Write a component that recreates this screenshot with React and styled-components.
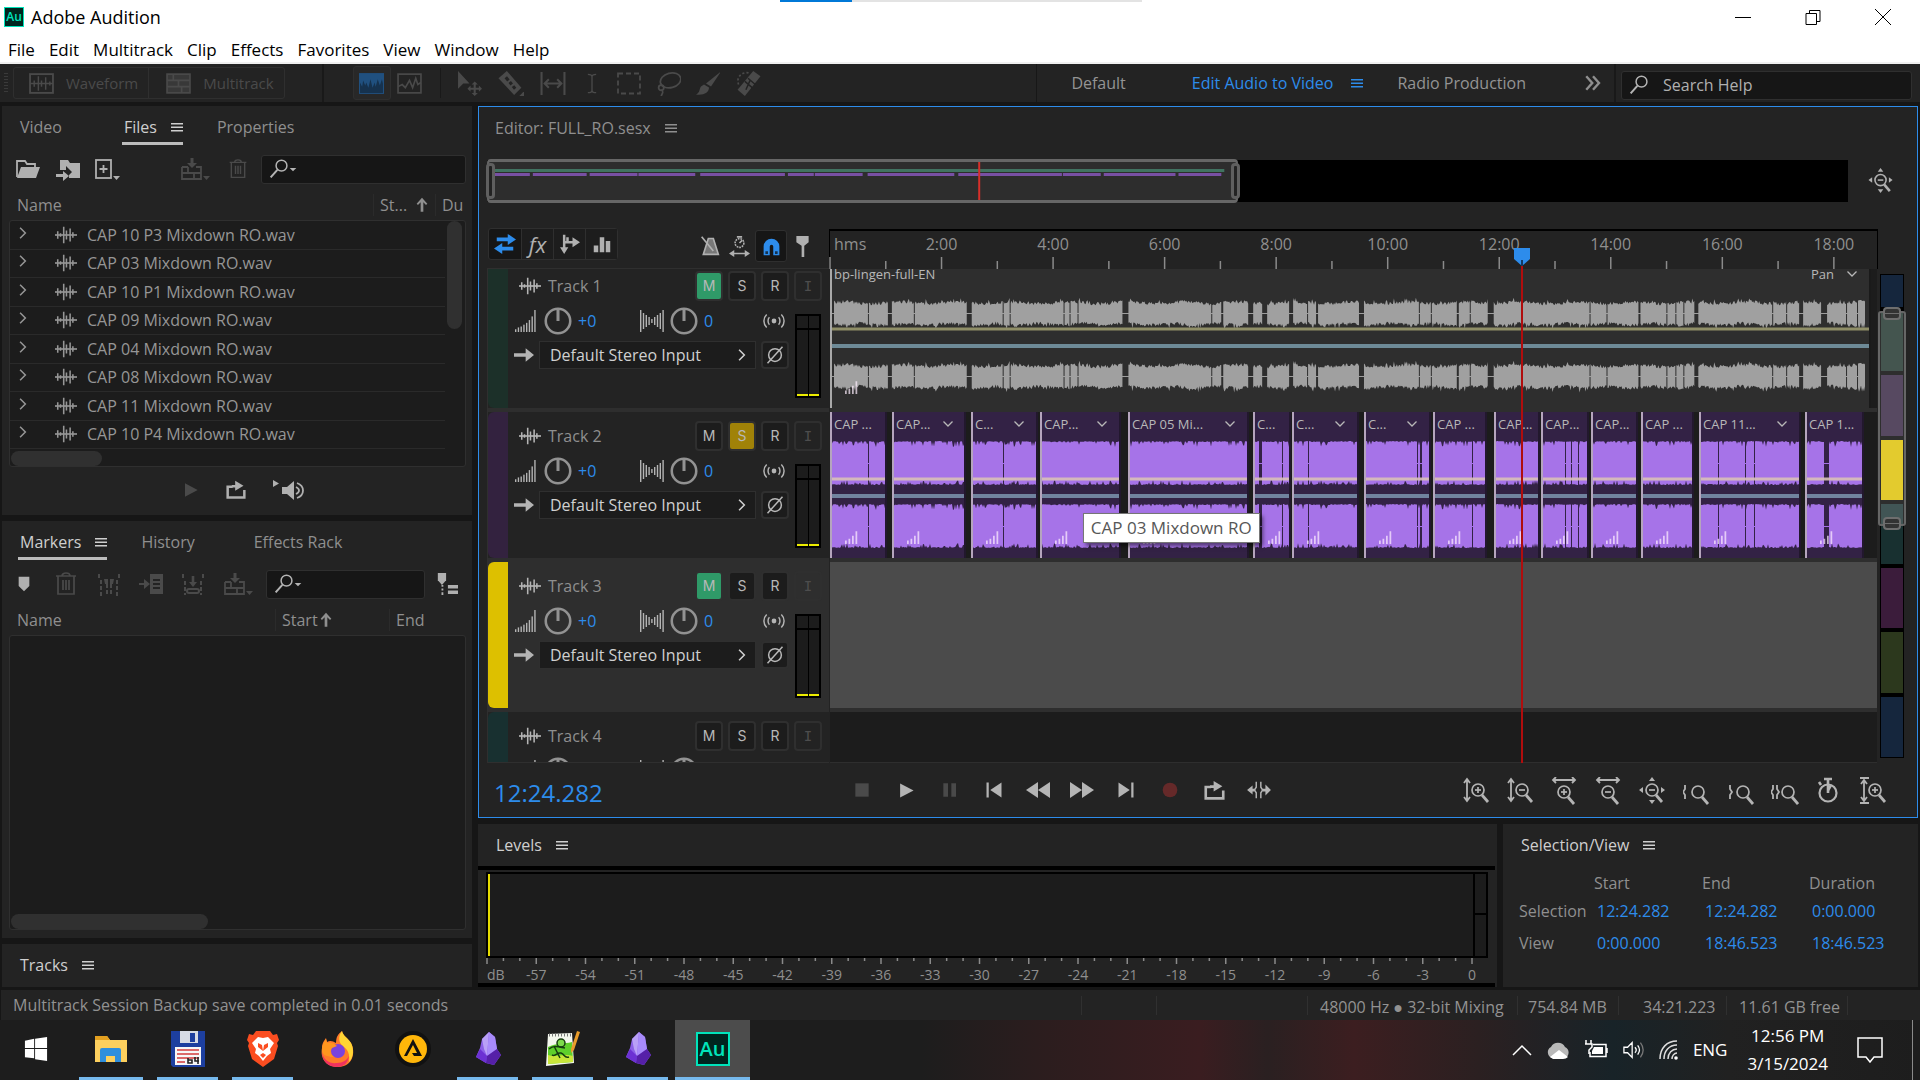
import React from "react";
import styled, { createGlobalStyle, css } from "styled-components";

const Global = createGlobalStyle`
  * { box-sizing: border-box; }
  body { margin: 0; background: #161616; }
  body, button, input, select, table { font: 16px/20px "Open Sans", "Noto Sans", sans-serif; }
  button { border: 0; padding: 0; background: none; color: inherit; white-space: nowrap; }
  svg { display: block; flex: none; }
`;

/* ---------- palette ---------- */
const c = {
  panel: "#232323",
  well: "#1c1c1c",
  deep: "#161616",
  line: "#2f2f2f",
  dim: "#8f8f8f",
  text: "#c2c2c2",
  off: "#4a4a4a",
  blue: "#2d8ceb",
};

/* ---------- icons ---------- */
const shapes = {
  wave: <g fill="none" stroke="currentColor"><path d="M0 12h24" strokeWidth="1.8" /><path d="M3 8v8M6 10v4M9.500 3v18M12.500 7v10M16.500 5v14M19.500 9v6" strokeWidth="1.7" /></g>,
  waveBox: <g fill="none" stroke="currentColor" strokeWidth="1.8"><rect x="1" y="3" width="22" height="18" /><path d="M1 12h22M5 9v6M9 5v14M12 9v6M16 6v12M20 10v4" strokeWidth="1.4" /></g>,
  multiBox: <g stroke="currentColor" strokeWidth="1.6"><rect x="1" y="3" width="22" height="18" fill="#383838" /><path d="M1 9h22M1 15h22M7 3v6M12 9v6M15 15v6" fill="none" /></g>,
  spectral: <g><rect x="0" y="2" width="24" height="20" fill="#20507f" /><path d="M1 21V11l2 4 1-6 2 5 1-3 2 5 2-8 2 8 2-5 1 4 2-7 2 6 2-6 1 4v9z" fill="#16324e" /></g>,
  lineBox: <g fill="none" stroke="currentColor" strokeWidth="1.6"><rect x="1" y="3" width="22" height="18" /><path d="M1 15l4-2 3 3 4-7 3 7 3-9 2 6 3-2" /></g>,
  move: <g fill="currentColor"><path d="M1 0l11 12H6l-5 5z" /><path d="M17 10l3 3h-2v3h3v-2l3 3-3 3v-2h-3v3h2l-3 3-3-3h2v-3h-3v2l-3-3 3-3v2h3v-3h-2z" /></g>,
  razor: <g fill="currentColor"><path d="M8 0L22 16l-7 7L0 7z" /><path d="M7 6l9 11" stroke="#232323" strokeWidth="3" strokeDasharray="4 2 3 2" /><path d="M25 19v5h-5z" /></g>,
  slip: <g fill="none" stroke="currentColor" strokeWidth="2"><path d="M1 1v22M23 1v22M4 12h16M8 8l-4 4 4 4M16 8l4 4-4 4" /></g>,
  ibeam: <g fill="none" stroke="currentColor" strokeWidth="1.6"><path d="M7 1c3 0 5 1 5 3 0-2 2-3 5-3M12 4v16M7 23c3 0 5-1 5-3 0 2 2 3 5 3" /></g>,
  marquee: <rect x="1" y="2" width="22" height="20" fill="none" stroke="currentColor" strokeWidth="1.8" strokeDasharray="5 3" />,
  lasso: <g fill="none" stroke="currentColor" strokeWidth="1.7"><ellipse cx="14" cy="9" rx="10" ry="7" transform="rotate(-15 14 9)" /><circle cx="5" cy="16" r="2.5" /><path d="M5 18c3 2 1 3 0 6" /></g>,
  brush: <g fill="currentColor"><path d="M25 0L15 15l-5-3z" /><path d="M8 13l5 3c0 5-5 8-13 7 4-2 3-5 5-8z" /></g>,
  heal: <g><path d="M17 0l7 5L9 24l-7-6z" fill="currentColor" /><path d="M9 10l7 6M12 7l7 6M14 9l-4 9" stroke="#232323" strokeWidth="1.4" /><path d="M3 13C0 6 7 0 13 2" fill="none" stroke="currentColor" strokeWidth="1.6" strokeDasharray="2 2" /></g>,
  folder: <g><path d="M1 20V4h8l2 3h8v3" fill="none" stroke="currentColor" strokeWidth="1.8" /><path d="M1 21L5 10h19l-4 11z" fill="currentColor" /></g>,
  importF: <g fill="currentColor"><path d="M4 13V3h8l2 3h10v15H13v-3l3-3-6-6v4z" /><path d="M0 17h7v-3l6 5-6 5v-4H0z" /></g>,
  newFile: <g fill="none" stroke="currentColor" strokeWidth="1.8"><rect x="1" y="3" width="15" height="18" /><path d="M8.500 8v8M4.500 12h8" /><path d="M18 19h7l-3.500 4z" fill="currentColor" stroke="none" /></g>,
  insert: <g fill="none" stroke="currentColor" strokeWidth="1.8"><path d="M1 10h6M15 10h5v12H1V10M1 16h19M7 10v6M13 16v6" /><path d="M11 1v6" strokeWidth="3" /><path d="M6 6h10l-5 5z" fill="currentColor" stroke="none" /><path d="M22 19h7l-3.500 4z" fill="currentColor" stroke="none" /></g>,
  trash: <g fill="none" stroke="currentColor" strokeWidth="1.7"><path d="M2 4h20M8 4c0-4 8-4 8 0M4 4v18h16V4M9 8v10M12 8v10M15 8v10" /></g>,
  search: <g fill="none" stroke="currentColor" strokeWidth="1.8"><circle cx="15" cy="8" r="6.500" /><path d="M10 13L2 22" strokeWidth="2.4" /></g>,
  caret: <path d="M2 9h20l-10 10z" fill="currentColor" />,
  marker: <path d="M4 1h16v14l-8 8-8-8z" fill="currentColor" />,
  markRange: <g fill="none" stroke="currentColor" strokeWidth="2"><path d="M2 2v5M22 2v5M4 8v16M20 8v16M10 12v12M14 12v12" strokeDasharray="4 2" /><path d="M7 7h4v5H8zM13 7h4l-1 5h-3z" fill="currentColor" stroke="none" /></g>,
  toList: <g fill="currentColor"><path d="M0 11h5V7l6 5-6 5v-4H0z" /><path d="M11 2h13v20H11zM14 7v2h7V7zm0 4v2h7v-2zm0 4v2h7v-2z" fillRule="evenodd" /></g>,
  dropMark: <g fill="none" stroke="currentColor" strokeWidth="2"><path d="M2 2v5M22 2v5M4 9v14M20 9v14" strokeDasharray="4 2" /><path d="M12 4v8" strokeWidth="2.6" /><path d="M8 10h8l-4 5z" fill="currentColor" stroke="none" /><rect x="6" y="17" width="12" height="4" rx="2" /></g>,
  markList: <g fill="currentColor"><path d="M2 0h9v8l-4.500 5L2 8z" /><path d="M6 13h2v2H6zm0 4h2v2H6zm0 4h2v3H6zM13 13h11v4H13zM13 19h11v4H13z" /></g>,
  play: <path d="M3 2l19 10L3 22z" fill="currentColor" />,
  stop: <path d="M2 2h20v20H2z" fill="currentColor" />,
  pause: <path d="M2 2h7v20H2zM14 2h7v20h-7z" fill="currentColor" />,
  loop: <g><path d="M8 8H2v13h20v-9" fill="none" stroke="currentColor" strokeWidth="3" /><path d="M7 6h4V1l10 6-10 6V9H7z" fill="currentColor" /></g>,
  speaker: <g fill="currentColor"><path d="M0 2l6 3.500L0 9z" /><path d="M9 9h5l7-6v19l-7-6H9z" /><path d="M23 9c4 2 4 5 0 7M24 5c8 3 8 12 0 15" fill="none" stroke="currentColor" strokeWidth="1.8" /></g>,
  first: <path d="M2 2h3v20H2zM22 2v20L7 12z" fill="currentColor" />,
  last: <path d="M19 2h3v20h-3zM2 2v20l15-10z" fill="currentColor" />,
  rew: <path d="M12 4v16L0 12zM24 4v16l-12-8z" fill="currentColor" />,
  ff: <path d="M0 4v16l12-8zM12 4v16l12-8z" fill="currentColor" />,
  rec: <circle cx="12" cy="12" r="11" fill="#652929" />,
  skipSel: <g fill="none" stroke="currentColor" strokeWidth="2"><path d="M10 3v6l-2 3 2 3v6M15 3v6l2 3-2 3v6" strokeWidth="1.6" /><path d="M5 12h3M17 12h4" strokeWidth="3" /><path d="M6 7l-6 5 6 5zM20 6l6 6-6 6z" fill="currentColor" stroke="none" /></g>,
  up: <path d="M12 1l8 9-2 2-4-4v14h-4V8l-4 4-2-2z" fill="currentColor" />,
  right: <path d="M0 10h14V4l10 8-10 8v-6H0z" fill="currentColor" />,
  chevR: <path d="M7 3l9 9-9 9" fill="none" stroke="currentColor" strokeWidth="2.6" />,
  chevD: <path d="M3 7l9 9 9-9" fill="none" stroke="currentColor" strokeWidth="2.6" />,
  dbl: <path d="M3 3l8 9-8 9M12 3l8 9-8 9" fill="none" stroke="currentColor" strokeWidth="3.2" />,
  burger: <path d="M0 4h24v3H0zM0 11h24v3H0zM0 18h24v3H0z" fill="currentColor" />,
  swap: <g fill="currentColor"><path d="M3 5h12V1l9 6-9 6V9H3z" /><path d="M21 15H9v-4l-9 6 9 6v-4h12z" /></g>,
  sends: <g fill="none" stroke="currentColor" strokeWidth="3"><path d="M5 1v17M5 10h12M9 4v6" /><path d="M15 4l9 6-9 6zM0 16h10l-5 8z" fill="currentColor" stroke="none" /></g>,
  eq: <path d="M1 14h6v9H1zM9 3h6v20H9zM17 8h6v15h-6z" fill="currentColor" />,
  metro: <g fill="none" stroke="currentColor" strokeWidth="2"><path d="M10 3h6l6 19H4z" fill="#777" /><path d="M2 1l14 17" /></g>,
  timer: <g fill="none" stroke="currentColor" strokeWidth="1.8"><circle cx="12" cy="8" r="5" strokeDasharray="2 1" /><path d="M12 8l3-3M9 1h6M2 20h20" /><path d="M6 16l-6 4 6 4zM18 16l6 4-6 4z" fill="currentColor" stroke="none" /></g>,
  magnet: <g><path d="M3 22V12a9 9 0 0118 0v10h-7V12a2 2 0 00-4 0v10z" fill="currentColor" /><path d="M5 19h3M16 19h3" stroke="#16324e" strokeWidth="3" /></g>,
  pin: <path d="M5 0h14v7l-5 4v13h-3V11L5 7z" fill="currentColor" />,
  vol: <g fill="currentColor">{[21, 19, 18, 16, 14, 11, 7, 0].map((y, i) => <rect key={i} x={i * 3} y={y} width="1.5" height={24 - y} />)}</g>,
  pan: <g fill="currentColor">{[11, 8, 6, 4, 2, 4, 6, 8, 11].map((h, i) => <rect key={i} x={i * 2.8} y={12 - h} width="1.4" height={h * 2} />)}</g>,
  knob: <g fill="none" stroke="#929292" strokeWidth="2.200"><circle cx="12" cy="12" r="10.500" /><path d="M12 2v10" strokeWidth="2.6" /></g>,
  air: <g fill="none" stroke="currentColor" strokeWidth="1.6"><circle cx="12" cy="12" r="1.800" fill="currentColor" /><path d="M7 8c-2 2-2 6 0 8M17 8c2 2 2 6 0 8M4 5c-4 4-4 10 0 14M20 5c4 4 4 10 0 14" /></g>,
  phase: <g fill="none" stroke="currentColor" strokeWidth="2"><circle cx="12" cy="12" r="8.500" /><path d="M2 23L22 1" /></g>,
  clipVol: <path d="M0 18h3v6H0zM6 15h3v9H6zM12 10h3v14h-3zM18 2h3v22h-3z" fill="currentColor" />,
};
const mag = (x, y, sign) => (
  <g key="m" fill="none" stroke="currentColor" strokeWidth="1.7">
    <circle cx={x} cy={y} r="6" />
    <path d={`M${x + 4} ${y + 5}l6 7`} strokeWidth="2.8" />
    {sign && <path d={`M${x - 3} ${y}h6`} />}
    {sign === "+" && <path d={`M${x} ${y - 3}v6`} />}
  </g>
);
const thin = { fill: "none", stroke: "currentColor", strokeWidth: 1.8 };
Object.assign(shapes, {
  zvIn: <g><path d="M4 3v20M1 6l3-4 3 4M1 20l3 4 3-4" {...thin} />{mag(15, 13, "+")}</g>,
  zvOut: <g><path d="M4 3v20M1 6l3-4 3 4M1 20l3 4 3-4" {...thin} />{mag(15, 13, "-")}</g>,
  zhIn: <g><path d="M2 3h22M5 0L2 3l3 3M21 0l3 3-3 3" {...thin} />{mag(13, 15, "+")}</g>,
  zhOut: <g><path d="M2 3h22M5 0L2 3l3 3M21 0l3 3-3 3" {...thin} />{mag(13, 15, "-")}</g>,
  zFull: <g>{mag(13, 13, "-")}<path d="M13 0l3 4h-6zM13 27l3-4h-6zM0 13l4-3v6zM26 13l-4-3v6z" fill="currentColor" /></g>,
  zInP: <g><path d="M2 8v4l-2 3 2 3v4" {...thin} />{mag(15, 15)}</g>,
  zOutP: <g><path d="M3 8v4l2 3-2 3v4" {...thin} />{mag(16, 15)}</g>,
  zSel: <g><path d="M2 8v4l-2 3 2 3v4M6 8v4l2 3-2 3v4" {...thin} />{mag(17, 15)}</g>,
  zTime: <g><circle cx="13" cy="16" r="8.500" {...thin} strokeWidth="2.200" /><path d="M13 16V3M9 2h8M6 8L4 5" {...thin} strokeWidth="2.600" /><path d="M13 16l4-7-4-1z" fill="currentColor" /></g>,
  zTrack: <g><path d="M5 3v21M2 7l3-4 3 4M2 20l3 4 3-4M1 1h9M1 26h9" {...thin} />{mag(16, 13, "+")}</g>,
});
function Icon({ n, s = 24, w, h, box = "0 0 24 24" }) {
  return <svg width={w || s} height={h || s} viewBox={box} aria-hidden="true">{shapes[n]}</svg>;
}

/* ---------- window chrome ---------- */
const App_ = styled.div`
  height: 100vh; min-height: 900px; min-width: 1500px; display: flex; flex-direction: column; color: ${c.dim};
`;
const TitleBar = styled.header`
  height: 32px; flex: none; display: flex; align-items: center; background: #fff; color: #000; padding: 2px 29px 0 4px; position: relative;
`;
const AuLogo = styled.span`
  width: ${(p) => p.$size}px; height: ${(p) => p.$size}px; display: flex; align-items: center; justify-content: center;
  background: #00251f; color: #00e4bb; border: ${(p) => (p.$size > 24 ? 2 : 1)}px solid #00e4bb;
  font-weight: 600; font-size: ${(p) => (p.$size > 24 ? 20 : 12)}px; line-height: 16px;
`;
const AppTitle = styled.h1`margin: 0 auto 0 7px; font-size: 18px; font-weight: 400; line-height: 24px;`;
const LoadBar = styled.div`
  position: absolute; top: 0; left: 40.6%; width: 18.9%; height: 2px; background: linear-gradient(90deg, #0078d7 20%, #e3e3e3 20%);
`;
const WinButtons = styled.div`display: flex; gap: 54px; button { width: 16px; height: 16px; }`;
const MenuBar = styled.nav`
  height: 32px; flex: none; display: flex; align-items: center; gap: 14px; padding: 5px 8px 0; background: #fff; color: #000; border-bottom: 2px solid #f0f0f0;
  button { font-size: 17px; line-height: 24px; }
`;
const ToolBar = styled.div`height: 38px; flex: none; display: flex; align-items: center; background: ${c.panel}; color: ${c.off};`;
const Grip = styled.span`width: 4px; height: 20px; margin: 0 5px 0 4px; background: repeating-linear-gradient(#3a3a3a 0 1px, transparent 1px 3px);`;
const ModeGroup = styled.div`display: flex; border: 1px solid ${c.line}; border-radius: 3px; height: 32px;`;
const ModeButton = styled.button`
  display: flex; align-items: center; gap: 12px; padding: 0 10px 0 15px; font-size: 15px; & + & { border-left: 1px solid ${c.line}; padding-left: 17px; }
`;
const Rule = styled.span`width: ${(p) => p.$w || 1}px; height: ${(p) => p.$h || 38}px; background: #191919; margin: 0 ${(p) => p.$r || 0}px 0 ${(p) => p.$l || 0}px;`;
const ViewButton = styled.button`
  width: 38px; height: 34px; display: grid; place-items: center; border-radius: 3px;
  ${(p) => p.$on && css`background: #282828; border: 1px solid ${c.line};`}
`;
const ToolSet = styled.div`display: flex; align-items: center; gap: 15px; margin-right: auto; button { display: grid; place-items: center; }`;
const Workspaces = styled.div`
  display: flex; align-items: center; height: 38px; border-left: 1px solid #171717; color: ${c.dim}; padding-left: 34px;
`;
const WorkButton = styled.button`color: ${(p) => (p.$on ? c.blue : "#949494")}; margin-right: ${(p) => p.$r}px; display: flex; align-items: center; gap: 18px;`;
const SearchBox = styled.label`
  display: flex; align-items: center; height: 29px; border: 1px solid ${c.line}; border-radius: 3px; background: ${c.deep}; color: #b4b4b4; padding-left: 7px; min-width: 0;
  flex: ${(p) => (p.$w ? `0 0 ${p.$w}px` : "1")}; margin: ${(p) => (p.$w ? "4px 8px 0 0" : 0)};
  input { flex: 1; min-width: 0; border: 0; outline: 0; background: none; color: inherit; padding: 0 0 0 ${(p) => (p.$w ? 14 : 2)}px; height: 20px; &::placeholder { color: #b0b0b0; opacity: 1; } }
`;

/* ---------- panels ---------- */
const Workspace = styled.main`flex: 1; min-height: 0; display: flex; gap: 6px; padding: 4px 2px 3px;`;
const LeftColumn = styled.aside`width: 470px; flex: none; display: flex; flex-direction: column; gap: 6px;`;
const MainColumn = styled.section`flex: 1; min-width: 0; display: flex; flex-direction: column; gap: 6px;`;
const Panel = styled.section`
  background: ${c.panel}; display: flex; flex-direction: column; min-width: 0; min-height: 0;
  flex: ${(p) => p.$flex || "none"};
`;
const Tabs = styled.div`display: flex; padding-left: ${(p) => p.$pad || 16}px; gap: ${(p) => p.$gap || 30}px; height: ${(p) => p.$h || 39}px; flex: none;`;
const Tab = styled.button`
  display: flex; align-items: center; gap: 14px; padding: 6px 0 0 ${(p) => (p.$inset ? 2 : 0)}px; height: 39px; line-height: 30px; margin-right: ${(p) => p.$r || 0}px;
  color: ${(p) => (p.$on ? "#cfcfcf" : c.dim)}; border-bottom: 3px solid ${(p) => (p.$line ? "#bcbcbc" : "transparent")};
`;
const Tools = styled.div`display: flex; align-items: center; height: 28px; flex: none; margin: 10px 6px 7px 14px; color: #b0b0b0;`;
const ToolButton = styled.button`color: ${(p) => (p.$off ? c.off : "inherit")}; margin: 0 ${(p) => p.$r || 0}px 0 ${(p) => p.$l || 0}px;`;
const DataTable = styled.table`
  display: flex; flex-direction: column; margin: 0 6px ${(p) => (p.$grow ? 8 : 0)}px 7px; position: relative; min-height: 0; flex: ${(p) => (p.$grow ? "1" : "none")};
  tr { display: grid; grid-template-columns: ${(p) => p.$cols}; }
  thead tr { height: 30px; align-items: center; }
  th { font-weight: 400; text-align: left; padding: 0 0 0 8px; height: 22px; overflow: hidden; white-space: nowrap; display: flex; justify-content: ${(p) => (p.$grow ? "flex-start" : "space-between")}; align-items: center; }
  th + th { border-left: 1px solid #2b2b2b; padding-left: 6px; padding-right: 5px; }
  th:last-child { padding-right: 0; }
  tbody { display: flex; flex-direction: column; background: ${c.well}; border: 1px solid ${c.line}; border-radius: 3px; padding-bottom: 17px; flex: ${(p) => (p.$grow ? "1" : "0 0 247px")}; }
`;
const FileRow = styled.tr`
  flex: 1; margin-right: 20px; border-bottom: 1px solid #2a2a2a;
  && { grid-template-columns: 1fr; align-items: center; }
  td { display: flex; align-items: center; padding: 0 0 0 6px; white-space: nowrap; color: #969696; }
  td > button { margin-right: 25px; padding-bottom: 4px; }
  td > svg { margin-right: 10px; }
`;
const Thumb = styled.caption`
  position: absolute; display: block; border-radius: 8px; background: #303030;
  ${(p) => (p.$v ? css`right: 4px; top: 31px; width: 15px; height: 108px;` : css`left: 2px; bottom: 1px; height: 15px; width: ${p.$w}px;`)}
`;
const Preview = styled.div`display: flex; justify-content: center; align-items: center; gap: 25px; height: 48px; color: #b0b0b0; padding-bottom: 3px; padding-left: 14px;`;

/* ---------- editor ---------- */
const Editor = styled(Panel)`border: 1px solid ${c.blue}; padding-left: 8px;`;
const OverviewRow = styled.div`display: flex; align-items: center; margin: 13px 23px 25px 0; height: 44px; flex: none; gap: 20px; color: #b0b0b0;`;
const Overview = styled.div`flex: 1; height: 42px; background: #000; position: relative;`;
const OverviewWindow = styled.div`
  position: absolute; left: 0; top: -1px; bottom: -1px; width: 55.2%; border: 3px solid #666; border-left-width: 2px; border-right-width: 2px; border-radius: 4px; background: #2d2d2d;
`;
const Handle = styled.span`
  position: absolute; top: 1px; bottom: 1px; width: 9px; border: 3px solid #5f5f5f; border-radius: 4px; background: #222;
  ${(p) => (p.$right ? "right: -4px;" : "left: -3px;")}
`;
const TrackArea = styled.div`flex: 1; min-height: 0; display: grid; grid-template-columns: 342px minmax(0, 1fr) 39px; grid-template-rows: 40px minmax(0, 1fr);`;
const TrackTools = styled.div`display: flex; align-items: flex-start; color: #b0b0b0; padding-right: 16px;`;
const ToggleGroup = styled.div`display: flex; margin: 0 auto 0 1px; border: 1px solid ${c.line}; border-radius: 3px; height: 32px; background: ${c.deep};`;
const Toggle = styled.button`
  width: 32px; display: grid; place-items: center; color: ${(p) => (p.$on ? c.blue : "inherit")};
  & + & { border-left: 1px solid ${c.line}; background: #1d1d1d; }
  em { font: italic 22px/24px "Open Sans", sans-serif; }
`;
const SideTools = styled.div`display: flex; align-items: center; gap: 5px; padding-top: 2px;`;
const Snap = styled.button`width: 32px; height: 32px; display: grid; place-items: center; background: ${c.deep}; border: 1px solid ${c.line}; border-radius: 3px; color: ${c.blue};`;
const Headers = styled.div`overflow: hidden; border: 1px solid ${c.line}; border-right: 0; grid-row: 2;`;
const Stack = styled.div`display: flex; flex-direction: column; gap: 4px; background: #2e2e2e; margin-top: -7px;`;
const TrackHead = styled.section`
  display: flex; height: 146px; flex: none; background: ${(p) => (p.$sel ? "#2e2e2e" : c.panel)}; padding-right: 7px; color: #b4b4b4;
`;
const ColorBar = styled.span`width: 20px; background: ${(p) => p.$c}; border-radius: 6px 0 0 6px;`;
const Controls = styled.div`flex: 1; min-width: 0; padding: 9px 5px 0 6px; display: flex; flex-direction: column; gap: 6px;`;
const Line = styled.div`display: flex; align-items: center; height: ${(p) => p.$h || 28}px; gap: ${(p) => p.$gap || 5}px; padding-left: ${(p) => p.$pad || 0}px;`;
const TrackName = styled.h2`margin: 0 auto 0 2px; font-size: 16px; line-height: 20px; font-weight: 400; color: ${c.dim};`;
const Sq = styled.button`
  width: 28px; height: ${(p) => p.$h || 30}px; display: grid; place-items: center; border-radius: 4px; border: 2px solid ${c.line};
  font: 14px/18px ${(p) => (p.$dim ? '"DejaVu Sans Mono", monospace' : "Inter, sans-serif")}; color: ${(p) => (p.$dim ? "#4d4d4d" : "#b8b8b8")};
  background: ${(p) => p.$bg || (p.$dim ? "transparent" : c.well)};
`;
const Value = styled.button`color: ${c.blue}; width: ${(p) => p.$w}px; text-align: left;`;
const SelectBox = styled.label`
  flex: 1; display: flex; align-items: center; position: relative; height: 28px; color: #d0d0d0; background: ${c.well}; border: 1px solid ${c.line};
  select { appearance: none; border: 0; background: none; color: inherit; width: 100%; height: 24px; padding: 0 0 0 10px; outline: 0; }
  svg { position: absolute; right: 6px; pointer-events: none; }
`;
const MeterCol = styled.div`width: 28px; padding-top: 9px; display: flex; flex-direction: column; align-items: center; gap: 13px;`;
const Meter = styled.div`
  width: 26px; height: 84px; border: 2px solid #000; display: grid; grid-template-columns: 1fr 1fr; gap: 0 1px; background: #000;
  i { background: linear-gradient(${c.well} 12px, #000 12px 14px, ${c.well} 14px); border-bottom: 2px solid #ecec00; }
`;
const Timeline = styled.div`grid-column: 2; grid-row: 1 / 3; position: relative; display: flex; flex-direction: column; padding: 0 1px; min-height: 0;`;
const Ruler = styled.div`height: 40px; margin: 1px -1px 0; flex: none; border: 1px solid #000; border-top-width: 2px; border-bottom: 0; position: relative; color: ${c.dim}; svg { position: absolute; left: 0; bottom: 0; overflow: visible; }`;
const RulerLabel = styled.span`position: absolute; top: 3px; ${(p) => (p.$start ? "left: 4px;" : "transform: translateX(-50%);")}`;
const Lanes = styled.div`flex: 1; min-height: 0; overflow: hidden; border: solid #2e2e2e; border-width: 0 0 1px;`;
const Lane = styled.div`height: 146px; flex: none; position: relative; background: ${(p) => (p.$sel ? "#4b4b4b" : c.well)};`;
const Clip = styled.article`
  position: absolute; top: 0; bottom: 0; background: ${(p) => p.$bg}; color: #b8b8b8; overflow: hidden; border-right: 2px solid ${(p) => p.$end};
`;
const ClipBar = styled.header`
  display: flex; align-items: center; position: relative; height: 28px; padding: 0 11px 5px 4px; font-size: 13px; line-height: 18px; white-space: nowrap; gap: 12px;
  span:first-child { margin-right: auto; }
`;
const ClipDraw = styled.svg`position: absolute; inset: 0; width: 100%; height: 146px;`;
const ClipMark = styled.span`position: absolute; left: 15px; top: 118px; color: rgba(255, 240, 255, 0.7);`;
const Playhead = styled.div`
  position: absolute; top: 20px; bottom: 0; width: 16px; margin-left: -8px; pointer-events: none;
  background: linear-gradient(90deg, transparent 7px, #b00d0d 7px 9px, transparent 9px);
`;
const Tip = styled.div`
  position: absolute; left: 24.2%; top: 285px; padding: 3px 7px; background: #fff; color: #575757; border: 1px solid #767676; box-shadow: 3px 3px 4px rgba(0, 0, 0, 0.5); font-size: 17px; line-height: 22px; white-space: nowrap;
`;
const MiniMap = styled.div`
  grid-column: 3; grid-row: 1 / 3; margin: 46px 13px 5px 2px; border: 1px solid #000; background: #000; display: flex; flex-direction: column; gap: 4px; position: relative;
`;
const MiniTrack = styled.i`flex: ${(p) => p.$f || 60}; background: ${(p) => p.$c};`;
const MiniWindow = styled.div`
  position: absolute; left: -3px; right: -3px; top: 7.500%; height: 44.500%; background: rgba(255, 255, 255, 0.18); border: 2px solid #666; border-radius: 3px;
  &::before, &::after { content: ""; position: absolute; left: 3px; right: 3px; height: 9px; border: 2px solid #6e6e6e; border-radius: 4px; background: linear-gradient(#6e6e6e, #6e6e6e) center / 100% 1px no-repeat #333; }
  &::before { top: -6px; } &::after { bottom: -6px; }
`;
const Footer = styled.div`display: flex; align-items: center; height: 54px; flex: none; padding: 0 30px 0 7px; color: #b4b4b4;`;
const Time = styled.output`font-size: 24px; line-height: 28px; color: ${c.blue}; padding-top: 6px; flex: 0 0 356px;`;
const Transport = styled.div`display: flex; align-items: center; gap: 20px; margin-right: auto; button { width: 24px; display: grid; place-items: center; } button:nth-child(1), button:nth-child(3) { color: ${c.off}; }`;
const Zooms = styled.div`display: flex; gap: 16px; padding-top: 2px;`;

/* ---------- lower panels ---------- */
const LowerRow = styled.div`display: flex; gap: 6px; height: 163px; flex: none;`;
const LevelsBody = styled.div`flex: 1; margin: 3px 2px 1px 0; border: solid #000; border-width: 4px 0; padding: 2px 7px 0 8px;`;
const LevelMeter = styled.div`
  height: 86px; border: 2px solid #000; display: grid; grid-template-columns: 1fr 11px; background: ${c.well};
  span:first-child { border-left: 2px solid #e6dc00; border-right: 2px solid #000; }
  span:last-child { background: linear-gradient(${c.well} 39px, #000 39px 41px, ${c.well} 41px); }
`;
const Scale = styled.div`margin: 0 16px 0 1px; svg { overflow: visible; }`;
const ScaleLabels = styled.div`
  display: flex; font-size: 14px; line-height: 16px; padding-top: 3px;
  span { flex: 0 0 5%; text-align: center; white-space: nowrap; } span:first-child { flex-basis: 2.5%; text-align: left; }
`;
const RangeTable = styled.table`
  margin: 8px 0 0 14px; border-collapse: collapse; width: 394px; table-layout: fixed;
  th, td { font-weight: 400; text-align: left; padding: 0 0 0 2px; height: 32px; }
  thead th { height: 24px; padding: 0; }
  td { color: ${c.blue}; padding-left: 3px; }
`;
const StatusBar = styled.footer`
  height: 30px; flex: none; display: flex; align-items: center; background: ${c.panel}; padding-left: 12px; margin-left: 1px; color: #929292; white-space: nowrap;
  p { margin: 0 auto 0 0; }
`;
const StatusCell = styled.span`border-left: 1px solid #303030; height: 19px; line-height: 22px; width: ${(p) => p.$w}px; padding-left: ${(p) => p.$p || 12}px;`;

/* ---------- task bar ---------- */
const TaskBar = styled.div`
  height: 60px; flex: none; display: flex; align-items: stretch; color: #fff;
  background: linear-gradient(90deg, #1d1d1d 48%, #2b1d1e 54%, #3a1d20 62.5%, #2a2021 66%, #3c1e20 70.5%, #2b2021 77%, #182328 84%, #212121 90%, #1d1d1d);
`;
const Task = styled.button`
  width: ${(p) => p.$w || 75}px; display: grid; place-items: center; position: relative; padding-bottom: 3px; background: ${(p) => (p.$on ? "#4c4c4c" : "transparent")};
  &::after { content: ""; position: absolute; bottom: 0; height: 3px; left: ${(p) => (p.$on ? 0 : 7)}px; right: ${(p) => (p.$on ? 0 : 7)}px; background: ${(p) => (p.$run ? "#76b9ed" : "transparent")}; }
`;
const Tray = styled.div`display: flex; align-items: center; gap: 14px; margin-left: auto; font-size: 17px; padding-right: 7px;`;
const Clock = styled.time`text-align: center; line-height: 28px; margin: 0 15px 0 6px;`;
const Desk = styled.button`border-left: 1px solid #8a8a8a; height: 60px; width: 1px; margin-left: 15px;`;

/* ---------- data ---------- */
const SPAN = 1047;
const pct = (v) => `${(v / SPAN) * 100}%`;
const files = ["10 P3", "03", "10 P1", "09", "04", "08", "11", "10 P4"].map((n) => `CAP ${n} Mixdown RO.wav`);
const clips = [
  [0, 57, "CAP ...", 0, [[38, 39]]], [62, 136, "CAP...", 1, []], [141, 208, "C...", 1, [[173, 174]]], [210, 291, "CAP...", 1, []],
  [298, 419, "CAP 05 Mi...", 1, []], [423, 461, "C...", 0, [[429, 432], [452, 453]]], [462, 529, "C...", 1, [[478, 479]]],
  [534, 601, "C...", 1, [[587, 588], [590, 592]]], [603, 657, "CAP ...", 0, [[642, 643]]], [664, 710, "CAP...", 0, []],
  [711, 759, "CAP...", 0, [[735, 736], [741, 742], [748, 749]]], [761, 808, "CAP...", 0, []], [811, 864, "CAP ...", 0, []],
  [869, 971, "CAP 11...", 1, [[888, 889], [915, 916], [924, 925]]], [975, 1034, "CAP 1...", 0, [[994, 999]]],
];
const greyRuns = [
  [0, 2], [4, 38], [39, 58], [62, 84], [85, 137], [142, 173], [174, 180], [181, 234], [235, 240], [241, 248], [249, 293], [299, 382], [383, 392], [394, 419],
  [424, 433], [438, 460], [464, 478], [479, 487], [489, 530], [535, 590], [591, 602], [603, 628], [630, 641], [642, 659], [665, 761], [762, 778], [779, 810],
  [812, 838], [839, 847], [848, 855], [856, 866], [870, 944], [945, 958], [959, 971], [975, 993], [999, 1018], [1019, 1029], [1030, 1037],
];
function rng(seed) {
  let s = seed;
  return () => { s = (s * 16807) % 2147483647; return s / 2147483647; };
}
function outline(a, b, r, top, bottom) {
  let up = "", down = "";
  for (let x = a; x <= b; x += 1) {
    up += `L${x} ${top(r, x).toFixed(1)}`;
    down = `L${x} ${bottom(r, x).toFixed(1)}` + down;
  }
  return "M" + (up + down).slice(1) + "Z";
}
const greyPath = (mid) => {
  const r = rng(77);
  return greyRuns.map(([a, b]) => outline(a, b, r,
    (q, x) => mid - 8.5 - Math.sin(x / 9) - q() * 3.5 - (q() > 0.94 ? 3 : 0),
    (q, x) => mid + 9.5 + Math.sin(x / 7) + q() * 3.5 + (q() > 0.93 ? 3 : 0))).join("");
};
const purplePath = (a, b, gaps, y) => {
  const r = rng(a * 31 + 11);
  const w = b - a;
  const cuts = [...gaps.map(([g, h]) => [g - a, h - a]), [w - 2, w]];
  let at = 1;
  return cuts.map(([g, h]) => {
    const d = outline(at, g, r,
      (q) => y + (q() > 0.75 ? q() * 6 : q()),
      (q) => y + 44 - (q() > 0.75 ? q() * 5 : q()));
    at = h;
    return d;
  }).join("");
};

function GreyClip() {
  return (
    <Clip $bg="#2e2e2e" $end="#1a1a1a" style={{ left: 0, width: pct(1041) }}>
      <ClipDraw viewBox="0 0 1041 146" preserveAspectRatio="none">
        <path d={greyPath(51) + greyPath(114)} fill="#a0a0a0" />
        <path d="M0 51.500H1037M0 114.500H1037" stroke="#a0a0a0" strokeWidth="1" />
        <path d="M0 67H1041" stroke="#8f8e67" strokeWidth="3" /><path d="M0 84H1041" stroke="#6e8a97" strokeWidth="4" />
        <path d="M1 0V146" stroke="#a9a9a9" strokeWidth="2" />
      </ClipDraw>
      <ClipBar><span>bp-lingen-full-EN</span><span>Pan</span><Icon n="chevD" s={12} /></ClipBar>
      <ClipMark><Icon n="clipVol" s={14} /></ClipMark>
    </Clip>
  );
}
function VoiceClip({ d: [a, b, label, chev, gaps] }) {
  const w = b - a;
  return (
    <Clip $bg="#332245" $end="#22182d" style={{ left: pct(a), width: pct(w) }}>
      <ClipDraw viewBox={`0 0 ${w - 2} 146`} preserveAspectRatio="none">
        <path d={purplePath(a, b, gaps, 29) + purplePath(a, b, gaps, 92)} fill="#a673e8" />
        <path d={`M0 51.500H${w}M0 114.500H${w}`} stroke="#a673e8" />
        <path d={`M0 67H${w}`} stroke="#d9c0b8" strokeOpacity=".9" strokeWidth="3" /><path d={`M0 84H${w}`} stroke="#71839f" strokeWidth="4" />
        <path d="M1 0V146" stroke="#b5a5bd" strokeWidth="2" />
      </ClipDraw>
      <ClipBar><span>{label}</span>{chev ? <Icon n="chevD" s={12} /> : null}</ClipBar>
      <ClipMark><Icon n="clipVol" s={14} /></ClipMark>
    </Clip>
  );
}
function Head({ n, color, mute, solo, sel }) {
  return (
    <TrackHead $sel={sel}>
      <ColorBar $c={color} />
      <Controls>
        <Line $h={30} $pad={5}>
          <Icon n="wave" s={22} /><TrackName>Track {n}</TrackName>
          <Sq $bg={mute && "#2f9a68"} aria-pressed={!!mute}>M</Sq><Sq $bg={solo && "#a08208"} aria-pressed={!!solo}>S</Sq><Sq>R</Sq>
        </Line>
        <Line $gap={6}>
          <Icon n="vol" w={24} h={22} /><button aria-label="Volume"><Icon n="knob" s={28} /></button><Value $w={56}>+0</Value>
          <Icon n="pan" s={24} /><button aria-label="Pan"><Icon n="knob" s={28} /></button><Value $w={53}>0</Value><Icon n="air" s={22} />
        </Line>
        <Line>
          <Icon n="right" s={20} />
          <SelectBox><select aria-label={`Track ${n} input`}><option>Default Stereo Input</option></select><Icon n="chevR" s={14} /></SelectBox>
          <Sq $h={28} aria-label="Phase"><Icon n="phase" s={18} /></Sq>
        </Line>
      </Controls>
      <MeterCol><Sq $dim>I</Sq><Meter><i /><i /></Meter></MeterCol>
    </TrackHead>
  );
}

const Burger = () => <Icon n="burger" s={12} />;
const Obsidian = () => (
  <svg width="28" height="34" viewBox="0 0 28 34"><path d="M15 0l6 5 2 12 4 6-7 10-8-2-10-6 4-9 2-9z" fill="#8b5fe6" /><path d="M15 0L8 7l2 10 3 7z" fill="#b9a0f7" /><path d="M15 0l6 5 2 12-10 7z" fill="#a88bfa" /><path d="M6 17l7 7-1 7-10-6z" fill="#6c31d3" /><path d="M13 24l10-7 4 6-7 10-8-2z" fill="#5620a8" /></svg>
);

export default function App() {
  return (
    <App_>
      <Global />
      <TitleBar>
        <LoadBar /><AuLogo $size={20}>Au</AuLogo><AppTitle>Adobe Audition</AppTitle>
        <WinButtons>
          {[["Minimize", "M0 8.500H16"], ["Restore", "M1 4.500h10.500v11H1zM4.500 4V1.500H15v11h-3"], ["Close", "M0 0L16 16M16 0L0 16"]].map(([l, d]) => (
            <button key={l} aria-label={l}><svg width="16" height="16" viewBox="0 0 16 16"><path d={d} fill="none" stroke="#000" /></svg></button>
          ))}
        </WinButtons>
      </TitleBar>
      <MenuBar>{"File Edit Multitrack Clip Effects Favorites View Window Help".split(" ").map((m) => <button key={m}>{m}</button>)}</MenuBar>
      <ToolBar>
        <Grip />
        <ModeGroup><ModeButton><Icon n="waveBox" s={25} />Waveform</ModeButton><ModeButton><Icon n="multiBox" s={25} />Multitrack</ModeButton></ModeGroup>
        <Rule $w={2} $l={37} $r={29} />
        <ViewButton $on aria-label="Spectral"><Icon n="spectral" s={25} /></ViewButton>
        <ViewButton aria-label="Pitch"><Icon n="lineBox" s={25} /></ViewButton>
        <Rule $h={30} $l={11} $r={15} />
        <ToolSet>
          {[["move", 27], ["razor", 26], ["slip", 28], ["ibeam", 20], ["marquee", 24], ["lasso", 25], ["brush", 24], ["heal", 26]].map(([n, s]) => (
            <button key={n} aria-label={n}><Icon n={n} w={s} h={25} /></button>
          ))}
        </ToolSet>
        <Workspaces>
          <WorkButton $r={66}>Default</WorkButton>
          <WorkButton $on $r={34}>Edit Audio to Video <Burger /></WorkButton>
          <WorkButton $r={58}>Radio Production</WorkButton>
          <button aria-label="More"><Icon n="dbl" w={18} h={18} /></button>
          <Rule $w={2} $l={12} $r={5} />
        </Workspaces>
        <SearchBox $w={291}><Icon n="search" s={20} /><input aria-label="Search Help" placeholder="Search Help" /></SearchBox>
      </ToolBar>

      <Workspace>
        <LeftColumn>
          <Panel>
            <Tabs $pad={18} $gap={34}>
              <Tab $r={26}>Video</Tab><Tab $on $line $inset>Files <Burger /></Tab><Tab>Properties</Tab>
            </Tabs>
            <Tools>
              <ToolButton $r={16} aria-label="Open"><Icon n="folder" s={24} /></ToolButton>
              <ToolButton $r={15} aria-label="Import"><Icon n="importF" s={24} /></ToolButton>
              <ToolButton $r={60} aria-label="New"><Icon n="newFile" w={26} h={24} box="0 0 26 24" /></ToolButton>
              <ToolButton $off $r={17} aria-label="Insert"><Icon n="insert" w={30} h={24} box="0 0 30 24" /></ToolButton>
              <ToolButton $off $r={13} aria-label="Delete"><Icon n="trash" s={20} /></ToolButton>
              <SearchBox><Icon n="search" s={20} /><Icon n="caret" s={8} /><input aria-label="Search files" /></SearchBox>
            </Tools>
            <DataTable $cols="364px 62px 1fr">
              <Thumb $v /><Thumb $w={91} />
              <thead><tr><th>Name</th><th>St... <Icon n="up" s={16} /></th><th>Du</th></tr></thead>
              <tbody>{files.map((f) => <FileRow key={f}><td><button aria-label="Expand"><Icon n="chevR" s={14} /></button><Icon n="wave" s={22} />{f}</td></FileRow>)}</tbody>
            </DataTable>
            <Preview>
              <ToolButton $off aria-label="Play"><Icon n="play" s={16} /></ToolButton>
              <ToolButton aria-label="Loop"><Icon n="loop" w={24} h={20} /></ToolButton>
              <ToolButton aria-label="Auto play"><Icon n="speaker" w={32} h={24} box="0 0 32 24" /></ToolButton>
            </Preview>
          </Panel>
          <Panel $flex="1">
            <Tabs $pad={16} $gap={34}>
              <Tab $on $line $inset>Markers <Burger /></Tab><Tab $r={25}>History</Tab><Tab>Effects Rack</Tab>
            </Tabs>
            <Tools>
              <ToolButton $r={22} aria-label="Add marker"><Icon n="marker" s={22} w={16} /></ToolButton>
              <ToolButton $off $r={19} aria-label="Delete marker"><Icon n="trash" s={24} /></ToolButton>
              <ToolButton $off $r={18} aria-label="Range"><Icon n="markRange" s={24} /></ToolButton>
              <ToolButton $off $r={18} aria-label="To playlist"><Icon n="toList" s={24} /></ToolButton>
              <ToolButton $off $r={19} aria-label="Merge"><Icon n="dropMark" s={24} /></ToolButton>
              <ToolButton $off $r={12} aria-label="Insert"><Icon n="insert" w={30} h={24} box="0 0 30 24" /></ToolButton>
              <SearchBox><Icon n="search" s={20} /><Icon n="caret" s={8} /><input aria-label="Search markers" /></SearchBox>
              <ToolButton $r={8} $l={11} aria-label="Marker list"><Icon n="markList" s={22} /></ToolButton>
            </Tools>
            <DataTable $grow $cols="266px 114px 1fr">
              <Thumb $w={197} />
              <thead><tr><th>Name</th><th>Start <Icon n="up" s={16} /></th><th>End</th></tr></thead>
              <tbody />
            </DataTable>
          </Panel>
          <Panel><Tabs $pad={18} $h={43}><Tab $on>Tracks <Burger /></Tab></Tabs></Panel>
        </LeftColumn>

        <MainColumn>
          <Editor $flex="1">
            <Tabs $pad={8}><Tab>Editor: FULL_RO.sesx <Burger /></Tab></Tabs>
            <OverviewRow>
              <Overview>
                <OverviewWindow>
                  <svg width="100%" height="38" viewBox="0 0 750 38" preserveAspectRatio="none">
                    <path d="M6 8.500H738" stroke="#417361" strokeWidth="3" />
                    <path d="M6 12.500H41M44 12.500H98M101 12.500H149M150 12.500H207M212 12.500H297M300 12.500H326M327 12.500H375M380 12.500H467M471 12.500H575M576 12.500H614M617 12.500H689M692 12.500H735" stroke="#7850a4" strokeWidth="3" />
                    <path d="M492 0V38" stroke="#d82f2a" strokeWidth="2" />
                  </svg>
                  <Handle /><Handle $right />
                </OverviewWindow>
              </Overview>
              <button aria-label="Zoom out full"><Icon n="zFull" s={26} box="0 0 27 28" /></button>
            </OverviewRow>
            <TrackArea>
              <TrackTools>
                <ToggleGroup>
                  <Toggle $on aria-label="Inputs"><Icon n="swap" s={22} /></Toggle><Toggle aria-label="Effects"><em>fx</em></Toggle>
                  <Toggle aria-label="Sends"><Icon n="sends" s={20} /></Toggle><Toggle aria-label="EQ"><Icon n="eq" s={18} /></Toggle>
                </ToggleGroup>
                <SideTools>
                  <ToolButton aria-label="Metronome"><Icon n="metro" w={28} h={20} /></ToolButton><ToolButton aria-label="Time stretch"><Icon n="timer" s={21} /></ToolButton>
                  <Snap aria-label="Snap"><Icon n="magnet" s={21} /></Snap><ToolButton aria-label="Marker"><Icon n="pin" s={21} /></ToolButton>
                </SideTools>
              </TrackTools>
              <Headers>
                <Stack>
                  <Head n={1} color="#1c3029" mute /><Head n={2} color="#33223f" solo /><Head n={3} color="#ddc000" mute sel /><Head n={4} color="#183030" />
                </Stack>
              </Headers>
              <Timeline>
                <Ruler>
                  <RulerLabel $start>hms</RulerLabel>
                  {[2, 4, 6, 8, 10, 12, 14, 16, 18].map((m) => <RulerLabel key={m} style={{ left: pct(m * 55.77) }}>{m}:00</RulerLabel>)}
                  <svg width="100%" height="12">
                    {Array.from({ length: 19 }, (_, i) => <line key={i} x1={pct(i * 55.77)} x2={pct(i * 55.77)} y1={i % 2 ? 4 : 0} y2="12" stroke="#8a8a8a" strokeWidth="1.500" />)}
                  </svg>
                </Ruler>
                <Lanes>
                  <Stack>
                    <Lane><GreyClip /></Lane>
                    <Lane>{clips.map((d) => <VoiceClip key={d[0]} d={d} />)}</Lane>
                    <Lane $sel /><Lane />
                  </Stack>
                </Lanes>
                <Playhead style={{ left: pct(692) }}><svg width="16" height="18"><path d="M0 0h16v11l-8 7-8-7z" fill="#2d8ceb" /><path d="M8 12v6" stroke="#123a63" strokeWidth="2" /></svg></Playhead>
                <Tip>CAP 03 Mixdown RO</Tip>
              </Timeline>
              <MiniMap>
                <MiniTrack $f={32} $c="#15263d" />
                {["#1c3029", "#33223f", "#ddc000", "#183030", "#3b1c3b", "#2c381d", "#15263d"].map((k, i) => <MiniTrack key={i} $c={k} />)}
                <MiniWindow />
              </MiniMap>
            </TrackArea>
            <Footer>
              <Time>12:24.282</Time>
              <Transport>
                {[["stop", 16], ["play", 17], ["pause", 16], ["first", 18], ["rew", 24], ["ff", 24], ["last", 18], ["rec", 16], ["loop", 21]].map(([n, s]) => (
                  <button key={n} aria-label={n}><Icon n={n} s={s} /></button>
                ))}
                <button aria-label="skip"><Icon n="skipSel" w={26} h={22} box="0 0 26 24" /></button>
              </Transport>
              <Zooms>
                {["zvIn", "zvOut", "zhIn", "zhOut", "zFull", "zInP", "zOutP", "zSel", "zTime", "zTrack"].map((n) => (
                  <button key={n} aria-label={n}><Icon n={n} s={28} box="0 0 28 28" /></button>
                ))}
              </Zooms>
            </Footer>
          </Editor>
          <LowerRow>
            <Panel $flex="1">
              <Tabs $pad={18}><Tab $on>Levels <Burger /></Tab></Tabs>
              <LevelsBody>
                <LevelMeter><span /><span /></LevelMeter>
                <Scale>
                  <svg width="100%" height="6">
                    {Array.from({ length: 61 }, (_, i) => <line key={i} x1={`${i / 0.6}%`} x2={`${i / 0.6}%`} y1="0" y2={i % 3 ? 3 : 6} stroke="#8a8a8a" strokeWidth="1.500" />)}
                  </svg>
                  <ScaleLabels><span>dB</span>{Array.from({ length: 20 }, (_, i) => <span key={i}>{i === 19 ? 0 : -57 + i * 3}</span>)}</ScaleLabels>
                </Scale>
              </LevelsBody>
            </Panel>
            <Panel $flex="0 0 415px">
              <Tabs $pad={18}><Tab $on>Selection/View <Burger /></Tab></Tabs>
              <RangeTable>
                <colgroup><col style={{ width: 77 }} /><col style={{ width: 108 }} /><col style={{ width: 107 }} /><col /></colgroup>
                <thead><tr><th /><th>Start</th><th>End</th><th>Duration</th></tr></thead>
                <tbody>
                  <tr><th>Selection</th><td>12:24.282</td><td>12:24.282</td><td>0:00.000</td></tr>
                  <tr><th>View</th><td>0:00.000</td><td>18:46.523</td><td>18:46.523</td></tr>
                </tbody>
              </RangeTable>
            </Panel>
          </LowerRow>
        </MainColumn>
      </Workspace>

      <StatusBar>
        <p>Multitrack Session Backup save completed in 0.01 seconds</p>
        <StatusCell $w={75} /><StatusCell $w={151} /><StatusCell $w={210}>48000 Hz ● 32-bit Mixing</StatusCell><StatusCell $w={101} $p={10}>754.84 MB</StatusCell>
        <StatusCell $w={108} $p={24}>34:21.223</StatusCell><StatusCell $w={121}>11.61 GB free</StatusCell><StatusCell $w={73} />
      </StatusBar>

      <TaskBar>
        <Task $w={72} aria-label="Start"><svg width="24" height="24" viewBox="0 0 26 26"><path d="M1 4l10-2v10H1zM12 2l13-2v12H12zM1 13h10v10L1 22zM12 13h13v13l-13-2z" fill="#fff" /></svg></Task>
        <Task $w={78} $run aria-label="Explorer"><svg width="34" height="30" viewBox="0 0 34 30"><path d="M1 2h12l3 4h17v22H1z" fill="#fdd05e" /><path d="M1 2h12l3 4H1z" fill="#e3a020" /><path d="M6 28V16q0-2 2-2h17q2 0 2 2v12h-6v-6h-9v6z" fill="#2f8fdd" /></svg></Task>
        <Task $run aria-label="Disk"><svg width="34" height="36" viewBox="0 0 34 36"><path d="M0 0h34v36H2l-2-2z" fill="#1d3f9f" /><path d="M9 0h18v12H9z" fill="#d6dbe4" /><path d="M19 2h5v9h-5z" fill="#1d3f9f" /><path d="M4 16h26v18H4z" fill="#f7f7f7" /><path d="M6 19h22M6 23h22M6 27h22M6 31h8" stroke="#d33b3b" strokeWidth="1.3" /><path d="M17 27v5h4v-3h-4M24 26v4h4M27 26v7" fill="none" stroke="#222" strokeWidth="1.6" /></svg></Task>
        <Task $run aria-label="Brave"><svg width="32" height="36" viewBox="0 0 32 36"><path d="M9 0h14l3 4 4-1 2 6-2 3 1 3-4 13-11 8L5 28 1 15l1-3-2-3 2-6 4 1z" fill="#fb4d20" /><path d="M16 7l5-1 6 6-4 6 1 4-4 3-4 5-4-5-4-3 1-4-4-6 6-6z" fill="#fff" /><path d="M11 12l4 2 1 6-5-4zM21 12l-4 2-1 6 5-4zM13 24l3-2 3 2-3 3z" fill="#fb4d20" /></svg></Task>
        <Task aria-label="Firefox"><svg width="36" height="36" viewBox="0 0 36 36"><path d="M22 0c1 5 6 7 9 12 5 9 2 24-13 24C6 36 0 27 2 17c0-5 2-7 4-10l1 4c3-2 6-1 9 1 0-6 2-9 6-12z" fill="#ff7a2a" /><path d="M22 0c1 5 6 7 9 12 3 6 3 14-2 19 1-8-1-12-5-15-6-4-6-11-2-16z" fill="#ffd534" /><path d="M2 21c1 8 8 12 15 11 6 0 10-3 12-7-1 7-5 11-12 11C8 36 2 30 2 21z" fill="#f1325e" /><circle cx="18" cy="20" r="7" fill="#7a43dd" /><path d="M2 19c0-5 2-8 4-11l1 4c4-1 7 0 10 3l-5 2c-3 3-1 7 2 9-7 0-12-2-12-7z" fill="#ff961e" /></svg></Task>
        <Task aria-label="AIMP"><svg width="36" height="36" viewBox="0 0 36 36"><circle cx="18" cy="18" r="18" fill="#111" /><circle cx="18" cy="18" r="14" fill="#ffb60a" /><path d="M18 8l9 17h-8l-2-3h5l-4-8-6 11H9z" fill="#111" /></svg></Task>
        <Task $run aria-label="Obsidian"><Obsidian /></Task>
        <Task $run aria-label="Notepad"><svg width="34" height="36" viewBox="0 0 34 36"><path d="M2 3l24-1 2 30-28 3z" fill="#f4f7ee" /><path d="M2 16c8-4 16-3 24-5l1 20-25 2z" fill="#5fcf2b" /><path d="M2 24c8 3 16-2 25 1v6l-25 2z" fill="#c9e63a" /><circle cx="15" cy="12" r="4" fill="#7ddc4b" stroke="#163c10" strokeWidth="1.500" /><path d="M3 18c5-4 10-2 16-1M6 24c4 2 5-3 9-2s3 6 8 4M8 15l6 12" fill="none" stroke="#163c10" strokeWidth="1.500" /><path d="M31 0l3 1-6 18-3 3v-4z" fill="#e99c2b" /><path d="M3 4h23" stroke="#777" strokeWidth="3" strokeDasharray="1 2" /></svg></Task>
        <Task $run aria-label="Obsidian notes"><Obsidian /></Task>
        <Task $run $on aria-label="Audition"><AuLogo $size={34}>Au</AuLogo></Task>
        <Tray>
          <button aria-label="Show hidden"><svg width="20" height="12" viewBox="0 0 20 12"><path d="M1 11l9-9 9 9" fill="none" stroke="#fff" strokeWidth="1.5" /></svg></button>
          <svg width="25" height="18" viewBox="0 0 25 18"><path d="M6 17a6 6 0 01-1-11 8 8 0 0114 0 6 6 0 010 11z" fill="#b9b9b9" /><path d="M4 16l9-7 9 7q-2 2-5 2H7z" fill="#fff" /></svg>
          <svg width="24" height="20" viewBox="0 0 24 20"><path d="M8 4.500h13v12H5V12M22 8v5" fill="none" stroke="#fff" strokeWidth="1.5" /><path d="M9 7h9v7H7v-3z" fill="#fff" /><path d="M1 0v4M6 0v4M0 4h7v3l-3 3v4" fill="none" stroke="#fff" strokeWidth="1.500" /></svg>
          <svg width="22" height="20" viewBox="0 0 24 20"><path d="M1 7h4l5-5v16l-5-5H1zM13 7q3 3 0 6M16 5q4 5 0 10" fill="none" stroke="#fff" strokeWidth="1.400" /><path d="M19 2q6 8 0 16" fill="none" stroke="#777" strokeWidth="1.400" /></svg>
          <svg width="20" height="20" viewBox="0 0 20 20"><path d="M1 19C1 8 8 1 18 1M5 19C5 11 10 5 18 5M9 19c0-6 4-10 9-10M13 19c0-3 2-6 5-6" fill="none" stroke="#ddd" strokeWidth="1.500" /><circle cx="17" cy="18" r="1.800" fill="#fff" /></svg>
          <span>ENG</span>
          <Clock>12:56 PM<br />3/15/2024</Clock>
          <button aria-label="Notifications"><svg width="26" height="26" viewBox="0 0 26 26"><path d="M1 1h24v19h-8l-4 5-4-5H1z" fill="none" stroke="#fff" strokeWidth="1.500" /></svg></button>
          <Desk aria-label="Show desktop" />
        </Tray>
      </TaskBar>
    </App_>
  );
}
